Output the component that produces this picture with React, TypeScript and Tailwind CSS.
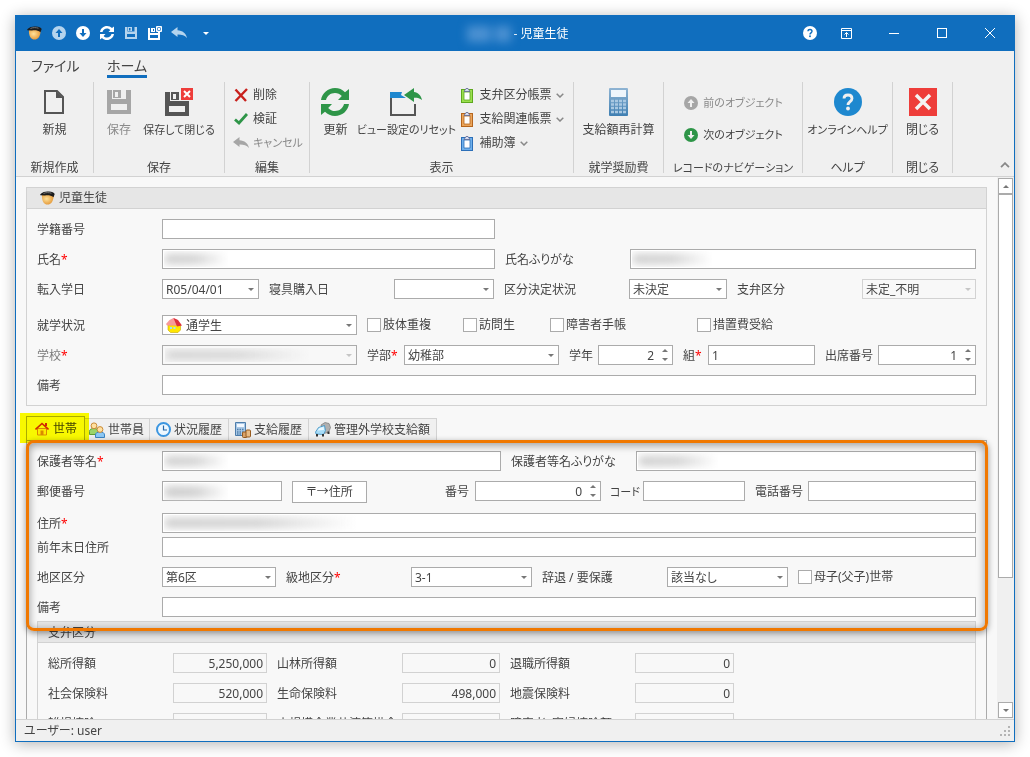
import { useId } from 'react'
import type { ReactNode } from 'react'
import clsx from 'clsx'

const inputBorder = 'h-5 w-full min-w-0 border border-[#ababab] bg-white'

/* ---------- icons ---------- */

function PupilIcon() {
  return (
    <svg viewBox="0 0 15 14" className="h-[14px] w-[15px] shrink-0">
      <defs>
        <radialGradient id="face" cx="0.4" cy="0.4" r="0.7">
          <stop offset="0" stopColor="#ffe29a" />
          <stop offset="1" stopColor="#e08f2c" />
        </radialGradient>
      </defs>
      <path d="M2 4h11.500c.4 5-2 9.600-6 9.600S1.500 9 2 4z" fill="url(#face)" />
      <path d="M.3 3.200C3 .6 6 .2 9 .5c3 .3 5 1.200 5.700 2.500l-1.200 3.200C11 4.500 8 4 5 4.600L.3 4.200z" fill="#1c1c1c" />
      <path d="M3.500 2.500C5.500 1.400 9 1.400 11.500 2.200" stroke="#777" fill="none" />
    </svg>
  )
}

function ArrowCircle({ up, fill, arrow }: { up?: boolean; fill: string; arrow: string }) {
  return (
    <svg viewBox="0 0 14 14" className={clsx('size-[14px] shrink-0', up && 'rotate-180')}>
      <circle cx="7" cy="7" r="7" fill={fill} />
      <path d="M6 3h2v4h2.500L7 11 3.500 7H6z" fill={arrow} />
    </svg>
  )
}

function RefreshIcon({ className, color }: { className: string; color: string }) {
  return (
    <svg viewBox="0 0 28 28" className={className}>
      <g fill={color}>
        <path d="M0 12C1 5 7 0 14 0c4 0 7.500 1.600 10 4.200L28 1v11H17l3.800-3.900C19 6.100 16.700 5 14 5c-4.500 0-8 2.800-9 7z" />
        <path d="M28 16c-1 7-7 12-14 12-4 0-7.500-1.600-10-4.200L0 27V16h11l-3.800 3.900C9 21.900 11.300 23 14 23c4.500 0 8-2.800 9-7z" />
      </g>
    </svg>
  )
}

function FloppyIcon({ className, color, bg }: { className: string; color: string; bg: string }) {
  return (
    <svg viewBox="0 0 24 24" className={className}>
      <path d="M0 0h24v24H0z" fill={color} />
      <path d="M5 0h14v9H5zM4 14h16v6H4z" fill={bg} />
      <path d="M6 0h8v8H6z" fill={color} />
      <path d="M8 2h3v5H8z" fill={bg} />
    </svg>
  )
}

function SaveCloseIcon() {
  return (
    <svg viewBox="0 0 28 28" className="size-7">
      <path d="M0 4h24v24H0z" fill="#555" />
      <path d="M5 4h14v9H5zM4 18h16v6H4z" fill="#f0f0f0" />
      <path d="M6 4h8v8H6z" fill="#555" />
      <path d="M8 6h3v5H8z" fill="#f0f0f0" />
      <path d="M15 0h13v13H15z" fill="#f0f0f0" />
      <path d="M16 0h12v12H16z" fill="#ee3d3a" />
      <path d="M19 3l6 6m0-6l-6 6" stroke="#fff" strokeWidth="2" />
    </svg>
  )
}

function SaveCloseMini() {
  return (
    <svg viewBox="0 0 14 14" className="size-[14px]" fill="none">
      <path d="M0 2h2v5h8V6h2v8H0z" fill="#fff" />
      <path d="M2 9h8v3H2z" fill="#106ebe" />
      <path d="M3 2h4v4H3z" fill="#fff" />
      <path d="M5 3h1v2H5z" fill="#106ebe" />
      <path d="M8.500.500h5v5h-5z" fill="#5b9cd6" stroke="#fff" />
      <path d="M9.500 1.500l3 3m0-3l-3 3" stroke="#fff" />
    </svg>
  )
}

function UndoIcon({ color }: { color: string }) {
  return (
    <svg viewBox="0 0 16 12" className="h-3 w-4 shrink-0">
      <path d="M0 5L6.500 0v3.200C11.500 3.500 15 6 16 11c-2.500-2.700-5.500-3.500-9.500-3.400V10z" fill={color} />
    </svg>
  )
}

function HelpCircle({ className, fill, mark }: { className: string; fill: string; mark: string }) {
  return (
    <svg viewBox="0 0 28 28" className={className}>
      <circle cx="14" cy="14" r="14" fill={fill} />
      <path d="M10 10.500C10 8.200 11.600 7 14 7s4 1.400 4 3.600c0 3-4 3.200-4 6.400" fill="none" stroke={mark} strokeWidth="2.800" />
      <circle cx="14" cy="20.500" r="1.900" fill={mark} />
    </svg>
  )
}

function NewIcon() {
  return (
    <svg viewBox="0 0 20 24" className="h-6 w-5">
      <path d="M1 1h12l6 6v16H1z" fill="none" stroke="#555" strokeWidth="2" />
      <path d="M12 1l7 7h-7z" fill="#555" />
    </svg>
  )
}

function ResetViewIcon() {
  return (
    <svg viewBox="0 0 32 28" className="h-7 w-8">
      <path d="M0 4h12l-1 3 5 3H0z" fill="#1e88cf" />
      <path d="M1 10v17h24V16" fill="none" stroke="#555" strokeWidth="2" />
      <path d="M14 7l10-7v4c4 .4 7 3.300 8 8-2.500-2-5-2.500-8-2.300V14z" fill="#2e9548" />
    </svg>
  )
}

function ClipboardIcon({ color, light }: { color: string; light: string }) {
  return (
    <svg viewBox="0 0 12 15" className="h-[15px] w-3 shrink-0">
      <path d="M0 1h12v14H0z" fill={color} />
      <path d="M1 2h10v12H1z" fill={light} />
      <path d="M3 4h6v8H3z" fill="#fff" stroke={color} strokeWidth="0.800" />
      <path d="M3 3.500L5 .5h2l2 3z" fill="#d7dcf0" stroke="#5c6690" strokeWidth="0.800" />
    </svg>
  )
}

function CalculatorIcon() {
  return (
    <svg viewBox="0 0 19 28" className="h-7 w-[19px]">
      <defs>
        <linearGradient id="calc" x1="0" y1="0" x2="0" y2="1">
          <stop offset="0" stopColor="#8fb4d3" />
          <stop offset="1" stopColor="#3f7fb2" />
        </linearGradient>
      </defs>
      <rect width="19" height="28" rx="1" fill="url(#calc)" />
      <path d="M2 2h15v7H2z" fill="#eef5fb" />
      <path d="M2 13h15M2 16.500h15M2 20h15M2 24h15" stroke="#a9c8e2" strokeWidth="2.400" strokeDasharray="3 1" />
    </svg>
  )
}

function CloseIcon() {
  return (
    <svg viewBox="0 0 28 28" className="size-7">
      <path d="M0 0h28v28H0z" fill="#ee3d3a" />
      <path d="M7 7l14 14m0-14L7 21" stroke="#f4f4f4" strokeWidth="3.500" />
    </svg>
  )
}

function HouseColorIcon() {
  return (
    <svg viewBox="0 0 16 15" className="h-[15px] w-4 shrink-0">
      <path d="M2 7h12.500v5L12 14.500H4.500L2 12z" fill="#ffe600" stroke="#c9a800" strokeWidth="0.600" />
      <path d="M0 6l3.500-4L7.500 0l4 2 1 5.500L1 7.500z" fill="#f79a9a" />
      <path d="M7.500 0L12 2l4 5.500-5 1z" fill="#dd2f3c" />
      <path d="M4 9h2v2H4zM7.500 9h2v2h-2z" fill="#9fe0ff" />
    </svg>
  )
}

function HomeTabIcon() {
  return (
    <svg viewBox="0 0 14 14" className="size-[14px] shrink-0">
      <path d="M2.500 6.500h9V13h-9z" fill="#ffe9b0" stroke="#d98a2b" />
      <path d="M5.500 8.500h3V13h-3z" fill="#d98a2b" />
      <path d="M.5 7.500L7 1.500l6.500 6" fill="none" stroke="#d02a10" strokeWidth="1.600" />
      <path d="M10 1h2v3h-2z" fill="#d02a10" />
    </svg>
  )
}

function PeopleIcon() {
  return (
    <svg viewBox="0 0 16 16" className="size-4 shrink-0">
      <path d="M.5 12.500V9.500C.5 7.500 2 6.500 5 6.500s4 1 4 3v3z" fill="#9bd46a" stroke="#5e9c33" />
      <circle cx="5" cy="3.800" r="2.900" fill="#ffe0a0" stroke="#c98a36" />
      <path d="M6.500 15.500v-2.500c0-2 1.500-3 4.500-3s4.500 1 4.500 3v2.500z" fill="#8cc8f5" stroke="#3a84c4" />
      <circle cx="11" cy="7.500" r="2.900" fill="#ffe0a0" stroke="#c98a36" />
    </svg>
  )
}

function ClockIcon() {
  return (
    <svg viewBox="0 0 15 15" className="size-[15px] shrink-0">
      <circle cx="7.500" cy="7.500" r="6.500" fill="#eef8ff" stroke="#3c96e0" strokeWidth="2" />
      <path d="M7.500 3.500V8H11" fill="none" stroke="#2466a8" strokeWidth="1.200" />
    </svg>
  )
}

function LedgerIcon() {
  return (
    <svg viewBox="0 0 16 16" className="size-4 shrink-0">
      <path d="M.5.500h10v13H.5z" fill="#a9c8e6" stroke="#4d7dab" />
      <path d="M2 2h7v3H2z" fill="#f2f8ff" />
      <path d="M2 7.500h7m-7 2.500h7m-7 2h7" stroke="#4d7dab" strokeDasharray="1.500 1" strokeWidth="1.300" />
      <rect x="7.500" y="10" width="4.500" height="5.500" rx="1" fill="#d9a36a" stroke="#965a1e" />
      <rect x="11" y="8" width="4.500" height="7" rx="1" fill="#e8bb85" stroke="#965a1e" />
    </svg>
  )
}

function CarIcon() {
  return (
    <svg viewBox="0 0 16 15" className="h-[15px] w-4 shrink-0">
      <path d="M6 3l4-2.500 4 1 1.500 4-2 5-5 1z" fill="#b0b0b0" stroke="#777" strokeWidth="0.700" />
      <path d="M.5 10L3.500 5.500 9.500 3.500 10.500 8.500l-2 4-7.500-.5z" fill="#a7dcf8" stroke="#3e8fc0" strokeWidth="0.800" />
      <path d="M2.500 8.500l2-2.500 4.200-1.200L9 8z" fill="#e8f8ff" />
      <path d="M1 12h2v2.500H1zM7 12h2v2.500H7zM12.500 9.500h2V12h-2z" fill="#333" />
    </svg>
  )
}

function Triangle({ up, className }: { up?: boolean; className?: string }) {
  return (
    <svg viewBox="0 0 6 3" className={clsx('h-[3px] w-[6px] shrink-0', up && 'rotate-180', className)}>
      <path d="M0 0h6L3 3z" fill="currentColor" />
    </svg>
  )
}

function Chevron({ up, className }: { up?: boolean; className?: string }) {
  return (
    <svg viewBox="0 0 8 5" className={clsx('shrink-0', up && 'rotate-180', className)}>
      <path d="M.7.7L4 4 7.300.7" fill="none" stroke="#888" strokeWidth="1.500" />
    </svg>
  )
}

/* ---------- form parts ---------- */

function Label({ htmlFor, required, dim, className, children }: { htmlFor?: string; required?: boolean; dim?: boolean; className?: string; children: ReactNode }) {
  return (
    <label htmlFor={htmlFor} className={clsx('h-5 leading-[22px] whitespace-nowrap', dim && 'text-[#7a7a7a]', className)}>
      {children}
      {required && <span className="text-[#ff0000]">*</span>}
    </label>
  )
}

// Masked personal data sits over the box as a soft smudge
function Masked({ className }: { className: string }) {
  return (
    <span className={clsx('pointer-events-none absolute inset-y-[2px] left-[2px] overflow-hidden', className)}>
      <span className="block h-full rounded-md border-y-[3px] border-transparent bg-linear-to-r from-[#cccccc] via-[#d0d0d0] to-transparent bg-clip-padding blur-[4px]" />
    </span>
  )
}

interface FieldProps {
  label: string
  value?: string
  required?: boolean
  dim?: boolean
  disabled?: boolean
  readOnly?: boolean
  masked?: string
  icon?: ReactNode
  labelClass?: string
}

function TextField({ label, value = '', required, masked, readOnly, labelClass = 'pl-[10px]' }: FieldProps) {
  const id = useId()
  return (
    <>
      <Label htmlFor={id} required={required} className={labelClass}>{label}</Label>
      <div className="relative min-w-0">
        <input
          id={id}
          type="text"
          defaultValue={value}
          readOnly={readOnly}
          className={readOnly ? 'block h-5 w-full min-w-0 border border-[#d2d2d2] bg-[#f8f8f8] px-[3px] text-right' : clsx(inputBorder, 'block px-[3px]')}
        />
        {masked && <Masked className={masked} />}
      </div>
    </>
  )
}

function SelectField({ label, value = '', required, dim, disabled, masked, icon, labelClass = 'pl-[10px]' }: FieldProps) {
  const id = useId()
  return (
    <>
      <Label htmlFor={id} required={required} dim={dim} className={labelClass}>{label}</Label>
      <div
        className={clsx(
          'relative flex h-5 min-w-0 items-center border',
          disabled && !masked ? 'border-[#d2d2d2] bg-[#f8f8f8]' : 'border-[#ababab]',
          disabled && masked && 'bg-[#f8f8f8]',
          !disabled && 'bg-white',
        )}
      >
        {icon && <span className="pl-[3px]">{icon}</span>}
        <select id={id} disabled={disabled} className={clsx('h-full w-full min-w-0 appearance-none pt-px pr-3 opacity-100', icon ? 'pl-1' : 'pl-[3px]')}>
          <option>{value}</option>
        </select>
        <Triangle className={clsx('pointer-events-none absolute right-1', disabled ? 'text-[#c6c6c6]' : 'text-[#777777]')} />
        {masked && <Masked className={masked} />}
      </div>
    </>
  )
}

function SpinField({ label, value, labelClass = 'pl-[10px]' }: FieldProps) {
  const id = useId()
  return (
    <>
      <Label htmlFor={id} className={labelClass}>{label}</Label>
      <div className={clsx(inputBorder, 'flex items-center')}>
        <input id={id} type="text" inputMode="numeric" defaultValue={value} className="h-full w-full min-w-0 text-right" />
        <span className="flex shrink-0 flex-col gap-[6px] pr-1 pl-2 text-[#777777]">
          <Triangle up />
          <Triangle />
        </span>
      </div>
    </>
  )
}

function CheckField({ label }: { label: string }) {
  return (
    <label className="flex h-5 items-center gap-[2px] pl-[10px] whitespace-nowrap">
      <input type="checkbox" className="size-[14px] shrink-0 appearance-none border border-[#ababab] bg-white checked:bg-[#106ebe]" />
      {label}
    </label>
  )
}

/* ---------- ribbon ---------- */

function RibbonGroup({ caption, className, children }: { caption: ReactNode; className: string; children: ReactNode }) {
  return (
    <div className={clsx('flex h-[91px] shrink-0 flex-col border-r border-[#d2d2d2]', className)}>
      <div className="flex h-[79px] justify-center">{children}</div>
      <div className="h-3 text-center leading-[14px] whitespace-nowrap">{caption}</div>
    </div>
  )
}

function BigButton({ icon, label, disabled, className }: { icon: ReactNode; label: string; disabled?: boolean; className?: string }) {
  return (
    <button type="button" disabled={disabled} className={clsx('flex h-[60px] flex-col items-center pt-1 whitespace-nowrap disabled:text-[#8a8a8a]', className)}>
      <span className="flex h-8 items-center justify-center">{icon}</span>
      <span className="leading-6">{label}</span>
    </button>
  )
}

function SmallButton({ icon, label, disabled, menu, className }: { icon: ReactNode; label: string; disabled?: boolean; menu?: boolean; className?: string }) {
  return (
    <button type="button" disabled={disabled} className={clsx('flex h-6 items-center gap-1 whitespace-nowrap disabled:text-[#8a8a8a]', className)}>
      <span className="flex w-4 justify-center">{icon}</span>
      {label}
      {menu && <Chevron className="h-[5px] w-2" />}
    </button>
  )
}

const quickButton = 'flex h-full w-6 items-center justify-center'
const captionButton = 'flex h-full items-center justify-center'

function TitleBar() {
  return (
    <header className="flex h-9 shrink-0 items-center bg-[#106ebe] text-white">
      <div className="flex h-full flex-1 items-center pl-[6px]">
        <span className="flex w-[25px] justify-center"><PupilIcon /></span>
        <button type="button" aria-label="前のオブジェクト" className={quickButton}><ArrowCircle up fill="#b4d4ee" arrow="#106ebe" /></button>
        <button type="button" aria-label="次のオブジェクト" className={quickButton}><ArrowCircle fill="#fff" arrow="#106ebe" /></button>
        <button type="button" aria-label="更新" className={quickButton}><RefreshIcon className="size-[14px]" color="#fff" /></button>
        <button type="button" aria-label="保存" className={quickButton}><FloppyIcon className="size-3" color="#b4d4ee" bg="#106ebe" /></button>
        <button type="button" aria-label="保存して閉じる" className={quickButton}><SaveCloseMini /></button>
        <button type="button" aria-label="キャンセル" className={quickButton}><UndoIcon color="#b4d4ee" /></button>
        <button type="button" aria-label="カスタマイズ" className="flex h-full w-[30px] items-center justify-center"><Triangle /></button>
      </div>
      <h1 className="flex items-center pt-px pr-1">
        <span className="flex h-6 w-[50px] items-center justify-center gap-1 blur-[5px]">
          <span className="h-4 w-6 bg-[#4c91d2]" />
          <span className="size-4 bg-[#4c91d2]" />
        </span>
        - 児童生徒
      </h1>
      <div className="flex h-full flex-1 justify-end">
        <button type="button" aria-label="ヘルプ" className={clsx(captionButton, 'w-9')}><HelpCircle className="size-[14px]" fill="#fff" mark="#106ebe" /></button>
        <button type="button" aria-label="リボンの表示" className={clsx(captionButton, 'mr-[6px] w-9')}>
          <svg viewBox="0 0 11 11" className="size-[11px]" fill="none" stroke="#fff">
            <path d="M.5.500h10v10H.5zM0 2.500h11M5.500 9V4.500M3.500 6.500l2-2 2 2" />
          </svg>
        </button>
        <button type="button" aria-label="最小化" className={clsx(captionButton, 'w-12')}><span className="h-px w-[10px] bg-white" /></button>
        <button type="button" aria-label="最大化" className={clsx(captionButton, 'w-12')}><span className="size-[10px] border border-white" /></button>
        <button type="button" aria-label="閉じる" className={clsx(captionButton, 'w-12')}>
          <svg viewBox="0 0 10 10" className="size-[10px]"><path d="M0 0l10 10m0-10L0 10" stroke="#fff" /></svg>
        </button>
      </div>
    </header>
  )
}

function Ribbon() {
  return (
    <section className="shrink-0 border-b border-[#d2d2d2] bg-[#f0f0f0] pb-[3px]">
      <nav className="mb-1 flex h-[27px] pl-[15px] text-sm leading-6">
        <button type="button" className="flex w-[76px] items-center pt-[3px]">ファイル</button>
        <button type="button" className="flex items-center border-b-[3px] border-[#106ebe] pt-[6px]">ホーム</button>
      </nav>
      <div className="flex">
        <RibbonGroup caption="新規作成" className="w-[78px]">
          <BigButton icon={<NewIcon />} label="新規" />
        </RibbonGroup>
        <RibbonGroup caption="保存" className="w-[131px]">
          <BigButton icon={<FloppyIcon className="size-6" color="#a6a6a6" bg="#f0f0f0" />} label="保存" disabled className="w-10" />
          <BigButton icon={<SaveCloseIcon />} label="保存して閉じる" className="w-20 text-[11px]" />
        </RibbonGroup>
        <RibbonGroup caption="編集" className="w-[85px]">
          <div className="flex w-full flex-col pt-px pl-2">
            <SmallButton
              icon={<svg viewBox="0 0 14 14" className="size-[14px]"><path d="M1.500 1.500L12 13M13 1L1.500 13" stroke="#c8201c" strokeWidth="2.400" /></svg>}
              label="削除"
            />
            <SmallButton
              icon={<svg viewBox="0 0 14 12" className="h-3 w-[14px]"><path d="M1 6.500L5 10 13 1" fill="none" stroke="#2e9548" strokeWidth="2.800" /></svg>}
              label="検証"
            />
            <SmallButton icon={<UndoIcon color="#a6a6a6" />} label="キャンセル" disabled className="text-[11px]" />
          </div>
        </RibbonGroup>
        <RibbonGroup caption="表示" className="w-[264px]">
          <BigButton icon={<RefreshIcon className="size-7" color="#2e9548" />} label="更新" className="w-10" />
          <BigButton icon={<ResetViewIcon />} label="ビュー設定のリセット" className="w-[102px] text-[11px]" />
          <div className="flex flex-col pt-px pr-1 pl-[2px]">
            <SmallButton icon={<ClipboardIcon color="#5ea81f" light="#9be04e" />} label="支弁区分帳票" menu />
            <SmallButton icon={<ClipboardIcon color="#b5651d" light="#eaa45a" />} label="支給関連帳票" menu />
            <SmallButton icon={<ClipboardIcon color="#2c6fb8" light="#6fb0ec" />} label="補助簿" menu />
          </div>
        </RibbonGroup>
        <RibbonGroup caption="就学奨励費" className="w-[90px]">
          <BigButton icon={<CalculatorIcon />} label="支給額再計算" />
        </RibbonGroup>
        <RibbonGroup caption={<span className="text-[11px]">レコードのナビゲーション</span>} className="w-[139px]">
          <div className="flex flex-col gap-2 pt-[9px]">
            <SmallButton icon={<ArrowCircle up fill="#a6a6a6" arrow="#f0f0f0" />} label="前のオブジェクト" disabled className="text-[11px]" />
            <SmallButton icon={<ArrowCircle fill="#2e9548" arrow="#f0f0f0" />} label="次のオブジェクト" className="text-[11px]" />
          </div>
        </RibbonGroup>
        <RibbonGroup caption="ヘルプ" className="w-[90px]">
          <BigButton icon={<HelpCircle className="size-7" fill="#1e88cf" mark="#f0f0f0" />} label="オンラインヘルプ" className="text-[11px]" />
        </RibbonGroup>
        <RibbonGroup caption="閉じる" className="w-[60px]">
          <BigButton icon={<CloseIcon />} label="閉じる" />
        </RibbonGroup>
        <button type="button" aria-label="リボンを折りたたむ" className="mr-px ml-auto flex size-4 items-center justify-center self-end">
          <Chevron up className="h-[6px] w-[10px]" />
        </button>
      </div>
    </section>
  )
}

/* ---------- page sections ---------- */

function StudentPanel() {
  return (
    <section className="border border-[#d2d2d2]">
      <h2 className="flex h-[21px] items-center gap-1 border-b border-[#d2d2d2] bg-[#e6e6e6] pl-[13px]">
        <PupilIcon />
        児童生徒
      </h2>
      <div className="flex flex-col gap-[10px] p-[10px]">
        <div className="grid grid-cols-[125px_333fr_481fr]">
          <TextField label="学籍番号" labelClass="" />
        </div>
        <div className="grid grid-cols-[125px_333fr_135px_346fr]">
          <TextField label="氏名" required masked="w-16" labelClass="" />
          <TextField label="氏名ふりがな" masked="w-20" />
        </div>
        <div className="mb-[6px] grid grid-cols-[125px_97fr_135px_100fr_135px_98fr_135px_114fr]">
          <SelectField label="転入学日" value="R05/04/01" labelClass="" />
          <SelectField label="寝具購入日" />
          <SelectField label="区分決定状況" value="未決定" />
          <SelectField label="支弁区分" value="未定_不明" disabled />
        </div>
        <div className="grid grid-cols-[125px_195fr_96fr_87fr_147fr_289fr]">
          <SelectField label="就学状況" value="通学生" icon={<HouseColorIcon />} labelClass="" />
          <CheckField label="肢体重複" />
          <CheckField label="訪問生" />
          <CheckField label="障害者手帳" />
          <CheckField label="措置費受給" />
        </div>
        <div className="grid grid-cols-[125px_195fr_47px_155fr_39px_75fr_35px_107fr_63px_98fr]">
          <SelectField label="学校" required dim disabled masked="w-36" labelClass="" />
          <SelectField label="学部" required value="幼稚部" />
          <SpinField label="学年" value="2" />
          <TextField label="組" required value="1" />
          <SpinField label="出席番号" value="1" />
        </div>
        <div className="grid grid-cols-[125px_1fr]">
          <TextField label="備考" labelClass="" />
        </div>
      </div>
    </section>
  )
}

const tabs = [
  { label: '世帯員', icon: <PeopleIcon />, pad: 'pl-1 pr-[5px]' },
  { label: '状況履歴', icon: <ClockIcon />, pad: 'px-[6px]' },
  { label: '支給履歴', icon: <LedgerIcon />, pad: 'px-[6px]' },
  { label: '管理外学校支給額', icon: <CarIcon />, pad: 'px-[6px]' },
]

function TabStrip() {
  return (
    <div role="tablist" className="mt-[10px] flex h-6 items-end">
      <div className="relative h-full">
        <button type="button" role="tab" aria-selected="true" className="flex h-full w-[59px] items-center gap-1 border border-b-0 border-[#ababab] bg-[#f8f8f8] pl-2 whitespace-nowrap">
          <HomeTabIcon />
          世帯
        </button>
        <span className="pointer-events-none absolute -top-[3px] -right-1 -bottom-[3px] -left-[6px] z-10 bg-[#ffff00] mix-blend-multiply" />
      </div>
      {tabs.map((tab) => (
        <button
          key={tab.label}
          type="button"
          role="tab"
          aria-selected="false"
          className={clsx('flex h-[22px] items-center gap-[3px] border-t border-r border-[#d2d2d2] bg-[#f0f0f0] whitespace-nowrap', tab.pad)}
        >
          {tab.icon}
          {tab.label}
        </button>
      ))}
    </div>
  )
}

function HouseholdForm() {
  return (
    <div className="relative flex flex-col gap-[10px]">
      <div className="grid grid-cols-[125px_339fr_135px_340fr]">
        <TextField label="保護者等名" required masked="w-16" labelClass="" />
        <TextField label="保護者等名ふりがな" masked="w-20" />
      </div>
      <div className="grid h-[22px] grid-cols-[125px_120fr_10px_75px_108fr_126fr_42px_102fr_63px_168fr]">
        <TextField label="郵便番号" masked="w-16" labelClass="" />
        <button type="button" className="col-start-4 h-[22px] border border-[#ababab] bg-white whitespace-nowrap">〒→住所</button>
        <SpinField label="番号" value="0" labelClass="pr-[6px] text-right" />
        <TextField label="コード" labelClass="pl-[9px] text-[11px]" />
        <TextField label="電話番号" />
      </div>
      <div className="grid grid-cols-[125px_1fr] gap-y-1">
        <TextField label="住所" required masked="w-48" labelClass="" />
        <TextField label="前年末日住所" labelClass="" />
      </div>
      <div className="grid grid-cols-[125px_114fr_135px_121fr_135px_121fr_188fr]">
        <SelectField label="地区区分" value="第6区" labelClass="" />
        <SelectField label="級地区分" required value="3-1" />
        <SelectField label="辞退 / 要保護" value="該当なし" />
        <CheckField label="母子(父子)世帯" />
      </div>
      <div className="grid grid-cols-[125px_1fr]">
        <TextField label="備考" labelClass="" />
      </div>
      <span className="pointer-events-none absolute -top-[11px] -right-3 -bottom-[14px] -left-[11px] z-20 rounded-lg border-[3px] border-[#f07800] shadow-[0_2px_6px_rgba(0,0,0,0.4),inset_0_2px_8px_rgba(0,0,0,0.4)]" />
    </div>
  )
}

const incomeRows = [
  [['総所得額', '5,250,000'], ['山林所得額', '0'], ['退職所得額', '0']],
  [['社会保険料', '520,000'], ['生命保険料', '498,000'], ['地震保険料', '0']],
  [['雑損控除', '0'], ['小規模企業共済等掛金', '0'], ['障害者・寡婦控除額', '0']],
]

function IncomePanel() {
  return (
    <section className="mt-1 border border-[#d2d2d2]">
      <h3 className="h-[21px] border-b border-[#d2d2d2] bg-[#e6e6e6] pl-[10px] leading-[21px]">支弁区分</h3>
      <div className="flex flex-col gap-[10px] p-[10px]">
        {incomeRows.map((row) => (
          <div key={row[0][0]} className="grid grid-cols-[125px_94fr_135px_98fr_135px_99fr_231fr]">
            {row.map(([label, value], i) => (
              <TextField key={label} label={label} value={value} readOnly labelClass={i === 0 ? '' : 'pl-[10px]'} />
            ))}
          </div>
        ))}
      </div>
    </section>
  )
}

function ScrollBar() {
  return (
    <div className="flex w-[17px] shrink-0 flex-col bg-[#f0f0f0] p-px text-[#777777]">
      <button type="button" aria-label="上へ" className="flex h-4 shrink-0 items-center justify-center border border-[#ababab] bg-white"><Triangle up /></button>
      <div className="flex-[384] border border-[#ababab] bg-white" />
      <div className="flex-[124]" />
      <button type="button" aria-label="下へ" className="flex h-4 shrink-0 items-center justify-center border border-[#ababab] bg-white"><Triangle /></button>
    </div>
  )
}

export default function App() {
  return (
    <div className="h-screen bg-white p-[15px] font-['Noto_Sans','Noto_Sans_CJK_JP',sans-serif] text-xs text-[#444444] [font-feature-settings:'palt']">
      <div className="flex h-full flex-col border border-t-0 border-[#106ebe] bg-[#f8f8f8] shadow-[0_2px_14px_rgba(0,0,0,0.3)]">
        <TitleBar />
        <Ribbon />
        <div className="flex min-h-0 flex-1">
          <main className="min-w-0 flex-1 overflow-hidden p-[10px]">
            <StudentPanel />
            <TabStrip />
            <div className="border border-[#ababab] p-[10px]">
              <HouseholdForm />
              <IncomePanel />
            </div>
          </main>
          <ScrollBar />
        </div>
        <footer className="flex h-[22px] shrink-0 items-center justify-between border-t border-[#d2d2d2] bg-[#f0f0f0] pr-1 pl-2">
          <span>ユーザー: user</span>
          <svg viewBox="0 0 10 10" className="size-[10px]" fill="#b4b4b4">
            <path d="M8 0h2v2H8zM4 4h2v2H4zM8 4h2v2H8zM0 8h2v2H0zM4 8h2v2H4zM8 8h2v2H8z" />
          </svg>
        </footer>
      </div>
    </div>
  )
}
